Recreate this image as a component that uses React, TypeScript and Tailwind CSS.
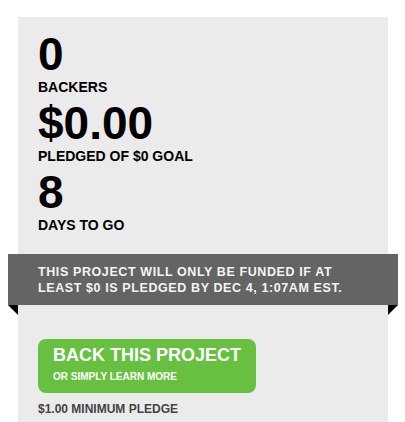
const font = { fontFamily: '"Liberation Sans", Arial, Helvetica, sans-serif' };

function Stat({ value, label, last }: { value: string; label: string; last?: boolean }) {
  return (
    <div className={last ? '' : 'mb-[6px]'}>
      <div className="text-[46px] leading-[46px] font-bold text-black">{value}</div>
      <div className="mt-[3px] text-[14px] leading-[14px] font-bold text-black">{label}</div>
    </div>
  );
}

export default function App() {
  return (
    <div className="bg-white min-h-[422px] pl-[18px] pt-[17px]" style={font}>
      <div className="w-[370px] bg-[#ebebeb] pt-[14px] pb-[20px]">
        {/* Stats */}
        <div className="px-[20px]">
          <Stat value="0" label="BACKERS" />
          <Stat value="$0.00" label="PLEDGED OF $0 GOAL" />
          <Stat value="8" label="DAYS TO GO" last />
        </div>

        {/* Funding notice ribbon */}
        <div className="relative mt-[22px] -mx-[10px] bg-[#646464] pl-[30px] pr-[10px] pt-[10px] pb-[9px]">
          <p className="text-[12.5px] leading-4 font-bold tracking-[0.6px] text-[#f4f4f4]">
            THIS PROJECT WILL ONLY BE FUNDED IF AT
            <br />
            LEAST $0 IS PLEDGED BY DEC 4, 1:07AM EST.
          </p>
          <svg className="absolute left-0 top-full" width="10" height="10" viewBox="0 0 10 10">
            <polygon points="0,0 10,0 10,10" fill="#000" />
          </svg>
          <svg className="absolute right-0 top-full" width="10" height="10" viewBox="0 0 10 10">
            <polygon points="0,0 10,0 0,10" fill="#000" />
          </svg>
        </div>

        {/* Call to action */}
        <div className="px-[20px] mt-[34px]">
          <a className="inline-block rounded-[8px] bg-[#67c03f] px-[15px] pt-[7px] pb-[11px] text-white">
            <div className="text-[18px] leading-[18px] font-bold">BACK THIS PROJECT</div>
            <div className="mt-[8px] text-[10px] leading-[10px] font-bold">OR SIMPLY LEARN MORE</div>
          </a>
          <div className="mt-[10px] text-[12px] leading-[12px] font-bold text-[#444]">$1.00 MINIMUM PLEDGE</div>
        </div>
      </div>
    </div>
  );
}
